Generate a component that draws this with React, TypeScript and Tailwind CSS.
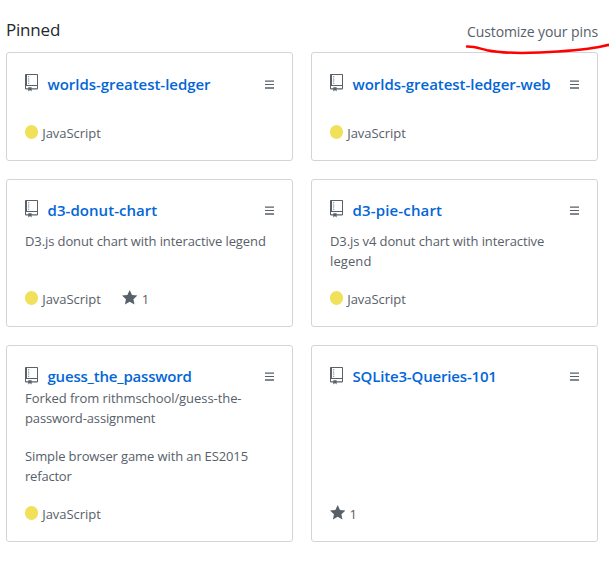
import React from "react";

type Repo = {
  name: string;
  nameClass: string;
  headClass: string;
  iconClass: string;
  forked?: string[][];
  description?: string[][];
  language?: string;
  stars?: number;
};

const repos: Repo[] = [
  {
    name: "worlds-greatest-ledger",
    nameClass: "tracking-[-0.04px]",
    headClass: "mt-[18px]",
    iconClass: "mt-[3px]",
    language: "JavaScript",
  },
  {
    name: "worlds-greatest-ledger-web",
    nameClass: "tracking-[-0.03px]",
    headClass: "mt-[18px]",
    iconClass: "mt-[3px]",
    language: "JavaScript",
  },
  {
    name: "d3-donut-chart",
    nameClass: "tracking-[0.05px]",
    headClass: "mt-[17px]",
    iconClass: "mt-[3px]",
    description: [["D3.js donut chart with interactive legend", "tracking-[-0.1px]"]],
    language: "JavaScript",
    stars: 1,
  },
  {
    name: "d3-pie-chart",
    nameClass: "tracking-[0.15px]",
    headClass: "mt-[17px]",
    iconClass: "mt-[3px]",
    description: [
      ["D3.js v4 donut chart with interactive", "tracking-[-0.1px]"],
      ["legend", "tracking-[0.1px]"],
    ],
    language: "JavaScript",
  },
  {
    name: "guess_the_password",
    nameClass: "tracking-[-0.2px]",
    headClass: "mt-[17px]",
    iconClass: "mt-[4px]",
    forked: [
      ["Forked from rithmschool/guess-the-", "tracking-[-0.06px]"],
      ["password-assignment", "tracking-[-0.13px]"],
    ],
    description: [
      ["Simple browser game with an ES2015", "tracking-[-0.11px]"],
      ["refactor", "tracking-[-0.2px]"],
    ],
    language: "JavaScript",
  },
  {
    name: "SQLite3-Queries-101",
    nameClass: "tracking-[-0.17px]",
    headClass: "mt-[17px]",
    iconClass: "mt-[4px]",
    stars: 1,
  },
];

function RepoIcon({ className }: { className: string }) {
  return (
    <svg className={`h-[18px] w-[13px] shrink-0 ${className}`} viewBox="0 0 13 18" fill="#586069">
      <path
        fillRule="evenodd"
        d="M.8 0h11.4q.8 0 .8.8v13.8q0 .8-.8.8H6.6v2.2L5 16l-1.7 1.6v-2.2H.8q-.8 0-.8-.8V.8Q0 0 .8 0zM2 1v10h10V1zM1 12.1v2.2h2.3v-1.1h3.3v1.1H12v-2.2z"
      />
      <path d="M3.2 2.2h1v1h-1zM3.2 4.4h1v1h-1zM3.2 6.6h1v1h-1zM3.2 8.8h1v1h-1z" />
    </svg>
  );
}

function Grabber() {
  return (
    <svg className="mt-[9px] ml-auto h-[9px] w-[9px] shrink-0" viewBox="0 0 9 9" fill="#586069">
      <path d="M0 .4h9v1.4H0zM0 4h9v1H0zM0 7.3h9v1.4H0z" />
    </svg>
  );
}

function Star() {
  return (
    <svg className="mb-[2px] h-[17.6px] w-[15.4px] shrink-0" viewBox="0 0 14 16" fill="#586069">
      <path d="M14 6l-4.9-.64L7 1 4.9 5.36 0 6l3.6 3.26L2.67 14 7 11.67 11.33 14l-.93-4.74L14 6z" />
    </svg>
  );
}

function Lines({ lines }: { lines: string[][] }) {
  return (
    <>
      {lines.map(([text, cls]) => (
        <div key={text} className="whitespace-nowrap">
          <span className={cls}>{text}</span>
        </div>
      ))}
    </>
  );
}

function Card({ repo }: { repo: Repo }) {
  return (
    <li className="flex flex-col rounded-[3px] border border-[#d1d5da] px-[18px] text-[13px] leading-5 text-[#586069]">
      <div className={`flex h-[27px] shrink-0 ${repo.headClass}`}>
        <RepoIcon className={repo.iconClass} />
        <a className="ml-[9.5px] whitespace-nowrap text-[15px] leading-[26px] font-semibold text-[#0366d6]">
          <span className={repo.nameClass}>{repo.name}</span>
        </a>
        <Grabber />
      </div>
      {repo.forked && (
        <div className="-mt-[2px] mb-[18px]">
          <Lines lines={repo.forked} />
        </div>
      )}
      {repo.description && (
        <div className={repo.forked ? "" : "mt-[7px]"}>
          <Lines lines={repo.description} />
        </div>
      )}
      <div className="mt-auto mb-[17px] flex h-5 items-center">
        {repo.language && (
          <div className="mr-[21.5px] flex items-center">
            <span className="mr-1 mb-[2px] h-[13.2px] w-[13.2px] rounded-full bg-[#f1e05a]" />
            <span className="tracking-[-0.04px]">{repo.language}</span>
          </div>
        )}
        {repo.stars && (
          <div className="flex items-center">
            <Star />
            <span className="ml-1">{repo.stars}</span>
          </div>
        )}
      </div>
    </li>
  );
}

export default function App() {
  return (
    <main className="relative h-[577px] w-[609px] overflow-hidden bg-white pr-[11px] pl-[6px] font-['Open_Sans','Noto_Sans',sans-serif]">
      <header className="flex h-[52px] justify-between">
        <h2 className="mt-[18px] text-[17px] leading-6 text-[#24292e]">
          <span className="tracking-[-0.2px]">Pinned</span>
        </h2>
        <a className="mt-[21px] text-[14px] leading-[22px] text-[#586069]">
          <span className="tracking-[-0.09px]">Customize your pins</span>
        </a>
      </header>
      <ol className="grid grid-cols-[287px_287px] grid-rows-[109px_148px_197px] gap-x-[18px] gap-y-[18px]">
        {repos.map((repo) => (
          <Card key={repo.name} repo={repo} />
        ))}
      </ol>
      <svg className="absolute top-[40px] left-[460px] h-[18px] w-[149px]" viewBox="460 40 149 18" fill="none">
        <path
          d="M467 46.5C474 46.3 480 48.6 487 50.2C500 52.8 514 53.2 530 52.8C556 52 578 50.4 594 47.8C600 46.8 605 45.5 610 44.7"
          stroke="#ff0000"
          strokeWidth="2.5"
          strokeLinecap="round"
        />
      </svg>
    </main>
  );
}
